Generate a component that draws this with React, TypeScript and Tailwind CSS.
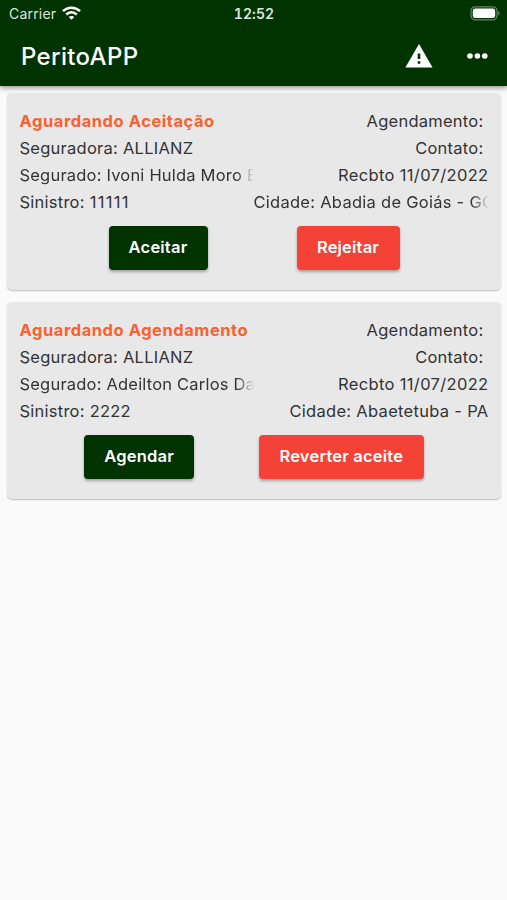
type Claim = {
  status: string;
  insured: string;
  claim: string;
  claimTracking: string;
  city: string;
  cityFades: boolean;
  accept: string;
  reject: string;
  acceptWidth: string;
  rejectWidth: string;
};

const claims: Claim[] = [
  {
    status: "Aguardando Aceitação",
    insured: "Ivoni Hulda Moro B",
    claim: "11111",
    claimTracking: "tracking-[1.3px]",
    city: "Abadia de Goiás - GO",
    cityFades: true,
    accept: "Aceitar",
    reject: "Rejeitar",
    acceptWidth: "w-[99px]",
    rejectWidth: "w-[103px]",
  },
  {
    status: "Aguardando Agendamento",
    insured: "Adeilton Carlos Da",
    claim: "2222",
    claimTracking: "tracking-[0.2px]",
    city: "Abaetetuba - PA",
    cityFades: false,
    accept: "Agendar",
    reject: "Reverter aceite",
    acceptWidth: "w-[110px]",
    rejectWidth: "w-[165px]",
  },
];

const fade =
  "[mask-image:linear-gradient(to_right,black_calc(100%-18px),transparent)]";
const button =
  "flex h-[43.5px] items-center justify-center rounded-[4px] text-[16.5px] font-semibold tracking-[0.2px] whitespace-nowrap text-white shadow-[0_2px_3px_rgba(0,0,0,0.3)]";

function Card({ item }: { item: Claim }) {
  return (
    <section className="h-[197px] rounded-[5px] bg-[#e8e8e8] px-[12.5px] pt-[14.5px] shadow-[0_1px_1.5px_rgba(0,0,0,0.24)]">
      <div className="flex text-[16.5px] leading-[27px] tracking-[0.25px] whitespace-nowrap text-[#333333]">
        <div className="w-[234px] shrink-0">
          <p className="font-bold tracking-[0.54px] text-[#fb602d]">{item.status}</p>
          <p>Seguradora: ALLIANZ</p>
          <p className={`overflow-hidden tracking-[0.2px] ${fade}`}>Segurado: {item.insured}</p>
          <p>
            Sinistro: <span className={item.claimTracking}>{item.claim}</span>
          </p>
        </div>
        <div className="w-[235px] shrink-0 text-right">
          <p className="pr-[5px]">Agendamento:</p>
          <p className="pr-[5px]">Contato:</p>
          <p className="tracking-[0.34px]">Recbto 11/07/2022</p>
          <p className={item.cityFades ? `overflow-hidden text-left tracking-[0.27px] ${fade}` : "tracking-[0.3px]"}>
            Cidade: {item.city}
          </p>
        </div>
      </div>
      <div className="mt-[10.5px] flex justify-evenly">
        <button className={`${button} ${item.acceptWidth} bg-[#003300]`}>{item.accept}</button>
        <button className={`${button} ${item.rejectWidth} bg-[#f44336]`}>{item.reject}</button>
      </div>
    </section>
  );
}

export default function App() {
  return (
    <div className="h-[900px] w-[507px] overflow-hidden bg-[#fafafa] font-['Inter',sans-serif]">
      <header className="relative h-[86px] bg-[#003300] text-white shadow-[0_2px_5px_rgba(0,0,0,0.4)]">
        <div className="grid h-[27px] grid-cols-3 items-center pr-[7px] pl-[9px]">
          <div className="flex items-center gap-[6px] text-[#dbe5db]">
            <span className="text-[14px] tracking-[0.2px]">Carrier</span>
            <svg className="-mt-[2px]" width="19" height="14" viewBox="0 0 19 14" fill="none" stroke="white" strokeWidth="2.5">
              <path d="M1 5.2C5.8.5 13.2.5 18 5.2" />
              <path d="M4.2 8.5c3-2.9 7.6-2.9 10.6 0" />
              <path d="M9.5 13.8 6.7 11c1.6-1.4 4-1.4 5.6 0Z" fill="white" stroke="none" />
            </svg>
          </div>
          <span className="pr-[1px] text-center text-[14px] font-semibold tracking-[0.1px] text-[#dce9dc] tabular-nums">12:52</span>
          <svg className="justify-self-end" width="31" height="15" viewBox="0 0 31 15">
            <rect x="2" y="0.8" width="26" height="13" rx="4" fill="none" stroke="#66856a" strokeWidth="1.2" />
            <rect x="3.8" y="2.6" width="22.4" height="9.4" rx="2.3" fill="white" />
            <path d="M29.2 5c1.8.7 1.8 3.9 0 4.6Z" fill="#66856a" />
          </svg>
        </div>
        <div className="flex h-[58px] items-center pr-[18px] pl-[21px]">
          <h1 className="pt-[1px] text-[24px] font-medium tracking-[0.33px]">PeritoAPP</h1>
          <svg className="ml-auto" width="28" height="24" viewBox="0 0 28 24">
            <path d="M14 0 27.6 23.5H.4Z" fill="white" />
            <path d="M12.7 9.5h2.6v5.4h-2.6zM12.7 17.2h2.6v2.6h-2.6z" fill="#003300" />
          </svg>
          <svg className="ml-[34px]" width="22" height="6" viewBox="0 0 22 6" fill="white">
            <circle cx="3" cy="3" r="2.8" />
            <circle cx="10.4" cy="3" r="2.8" />
            <circle cx="17.8" cy="3" r="2.8" />
          </svg>
        </div>
      </header>
      <main className="flex flex-col gap-[12px] pt-[7px] pr-[6px] pl-[7px]">
        {claims.map((item) => (
          <Card key={item.claim} item={item} />
        ))}
      </main>
    </div>
  );
}
